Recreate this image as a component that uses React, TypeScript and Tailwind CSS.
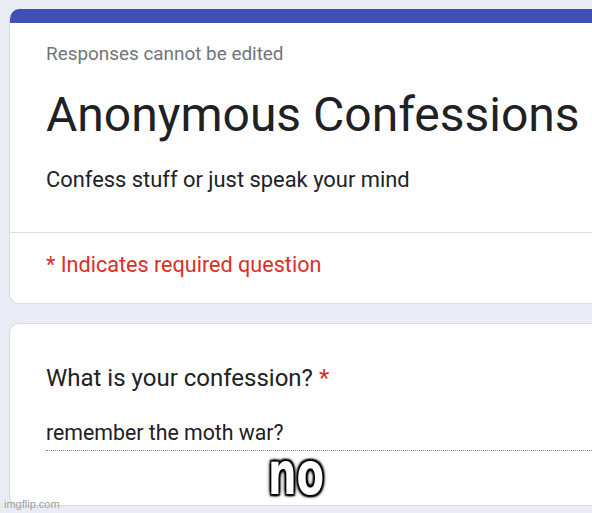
import React from 'react';

const font = { fontFamily: 'Roboto, "Noto Sans", sans-serif' };

export default function App() {
  return (
    <div className="relative w-[592px] h-[513px] overflow-hidden bg-[#eaecf5]" style={font}>
      <div className="pl-[9px] pt-[9px] flex flex-col gap-[19px]">
        {/* Header card */}
        <div className="w-[640px] rounded-[10px] overflow-hidden bg-white border border-[#dadce0] border-t-0">
          <div className="h-[14px] bg-[#3f51b5]" />
          <div className="px-[36px] pt-[19px]">
            <div className="text-[18.9px] text-[#70757a] leading-[24px]">Responses cannot be edited</div>
            <h1 className="mt-[21px] text-[48px] leading-[56px] text-[#202124]">Anonymous Confessions</h1>
            <p className="mt-[23px] text-[21.9px] leading-[28px] text-[#202124]">Confess stuff or just speak your mind</p>
          </div>
          <div className="mt-[38px] border-t border-[#dadce0]" />
          <div className="px-[36px] pt-[18px] pb-[24px] text-[21.6px] leading-[28px] text-[#d93025]">
            * Indicates required question
          </div>
        </div>

        {/* Question card */}
        <div className="w-[640px] h-[183px] rounded-[10px] bg-white border border-[#dadce0]">
          <div className="px-[36px] pt-[39px]">
            <div className="text-[24px] leading-[30px] text-[#202124]">
              What is your confession? <span className="text-[#d93025]">*</span>
            </div>
            <div className="mt-[27px] text-[21.3px] leading-[26px] text-[#202124] pb-[4px] border-b border-dotted border-[#80868b]">
              remember the moth war?
            </div>
          </div>
        </div>
      </div>

      {/* meme caption */}
      <div
        className="absolute left-[268px] top-[445px] text-[58px] leading-[58px] font-bold text-white scale-x-[0.77] origin-left"
        style={{
          fontFamily: '"DejaVu Sans Condensed", "Liberation Sans", sans-serif',
          textShadow:
            '0 0 3px #000, 2px 2px 2px #000, -2px -2px 2px #000, 2px -2px 2px #000, -2px 2px 2px #000, 0 0 6px #000',
        }}
      >
        no
      </div>
      <div
        className="absolute left-[4px] top-[497px] text-[11px] leading-[14px] text-[#a0a0a0]"
        style={{ fontFamily: '"Liberation Sans", Arial, sans-serif' }}
      >
        imgflip.com
      </div>
    </div>
  );
}
